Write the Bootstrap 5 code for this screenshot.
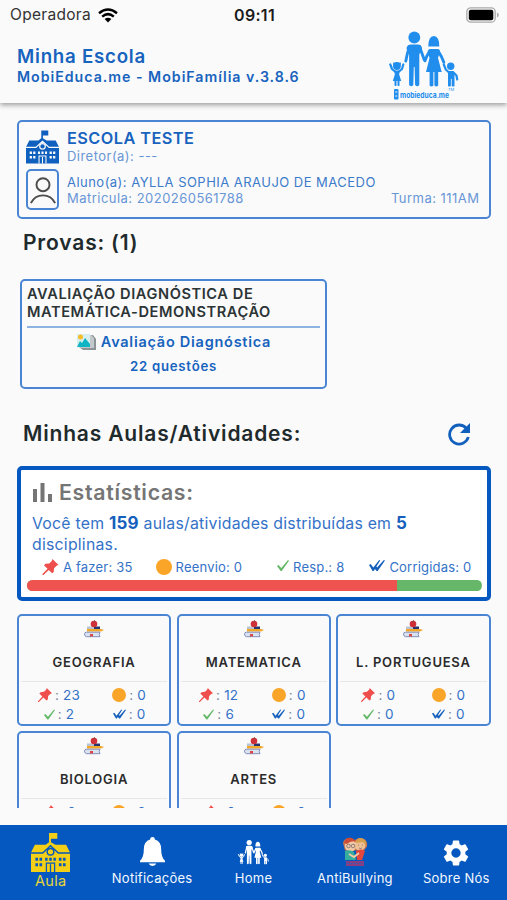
<!DOCTYPE html>
<html lang="pt-BR">
<head>
<meta charset="utf-8">
<meta name="viewport" content="width=device-width, initial-scale=1">
<title>Minha Escola</title>
<link rel="stylesheet" href="https://cdn.jsdelivr.net/npm/bootstrap@5.3.0/dist/css/bootstrap.min.css">
<style>
:root{--blue:#0458bf;--line:#4985d2;--soft:#3d7bcb}
body{font-family:Inter,"Liberation Sans",sans-serif;background:#fafafa;color:#1f2a2c;height:900px;overflow:hidden}
svg{display:block;flex:none}
.app{height:900px}
.top-bar{height:103px;background:#fafafa;box-shadow:0 2px 5px rgba(0,0,0,.38);z-index:2;flex:none}
.status{height:30px;padding:0 8px 0 10px;color:#1c1c1c}
.status>div{flex:1}
.carrier{font-size:15.5px;letter-spacing:.3px;color:#333}
.clock{font-size:16px;font-weight:600;letter-spacing:.3px}
.titles{padding:15px 0 0 17px;color:#1763be;font-weight:600}
.t1{font-size:18.7px;line-height:23px;letter-spacing:.75px}
.t2{font-size:14.2px;line-height:18px;letter-spacing:.98px}
.brand{margin-right:46px}
.content{height:705px;overflow:hidden;padding:17px 16.5px 0 17px;flex:none}
.box{border:2px solid var(--line);border-radius:5px}
.school{height:99px;padding:8px 9px 0 7px;color:var(--soft);font-size:13px;line-height:16px;letter-spacing:.47px}
.school-name{font-size:16.3px;font-weight:600;line-height:17px;color:#1763be;letter-spacing:.45px}
.director{line-height:19px}
.student{margin-top:3px}
.student-text{padding-top:5px}
.pale{color:#6896d6}
.avatar{width:33px;height:41px}
.heading{font-size:21px;font-weight:600;line-height:24px;letter-spacing:.82px}
.exams-head{margin:12px 0 0 6px}
.exam{width:307px;height:110px;margin:24px 0 0 3px;padding:5px 5px}
.exam-title{font-size:14.6px;font-weight:600;line-height:17.5px;letter-spacing:.58px;color:#2c3436}
.exam-kind{font-size:14.5px;line-height:20px;letter-spacing:.74px;color:#1763be}
.exam-count{font-size:13.2px;line-height:16px;letter-spacing:.75px;color:#1763be;margin-top:5.5px}
.rule{height:1.5px;background:#8db3e3;margin:5px 0 4.5px}
.lessons-head{margin:33px 0 0 6px;padding-right:20px}
.stats{border:4px solid var(--blue);border-radius:5px;height:135px;background:#fff;color:#3472c8;margin-top:20px}
.stats-title{font-size:21.3px;font-weight:600;line-height:26px;letter-spacing:.7px;color:#757575}
.stats-text{font-size:15.8px;line-height:21px;letter-spacing:.24px;padding:8px 20px 0 11px}
.stats-text b{font-size:17px;font-weight:700;color:#1560bd}
.legend-row{font-size:13px;line-height:16px;letter-spacing:.2px;padding:4px 15px 0 21px}
.progress.day{height:11px;border-radius:6px;margin:5px 5px 0 6px;background:#66b76a}
.bg-todo{background:#ee534f}
.bg-done{background:#66b76a}
.subjects{display:grid;grid-template-columns:repeat(3,1fr);gap:5px 5.5px;margin-top:13px}
.subject{height:112px;padding:4px 2px 0}
.subject-name{font-size:13px;font-weight:600;line-height:18px;letter-spacing:.78px;color:#2b2b2b;margin-top:15px;text-align:center}
.thin{height:1px;background:#e7e7e7;margin-top:10px}
.counts{font-size:13.5px;line-height:19px;letter-spacing:.2px;color:#3472c8;padding:3.500px 3px 0}
.counts .col-6{height:19px;gap:3px}
.counts i{font-style:normal;color:#7a8ba5}
.tabs{margin-top:16.5px;height:75.5px;background:var(--blue);color:#f4f8ff;font-size:13px;letter-spacing:.26px;flex:none}
.tabs .tab{flex:1;height:75px;padding-bottom:12.5px;line-height:17px}
.tabs .tab svg{margin-bottom:4px}
.tabs .active-tab{color:#e8d43a;font-size:14.5px;padding-bottom:10.5px}
.tabs .active-tab svg{margin-bottom:0}
</style>
</head>
<body>
<svg width="0" height="0" class="position-absolute" aria-hidden="true">
<defs>
<symbol id="school" viewBox="0 0 40 40"><path fill="currentColor" d="M18.500 0H27v6h-6.500v3.500L25 12h11l4 8v20H0V20l4-8h11l3.500-2.500z"/><path fill="none" stroke="var(--hole)" stroke-width="1.400" d="M0 20.500h12l8-7.500 8 7.500h12"/><circle cx="20" cy="19.200" r="3.400" fill="currentColor" stroke="var(--hole)" stroke-width="1.500"/><path fill="none" stroke="var(--hole)" stroke-width="1.300" d="M15.800 40V31h8.400v9M20 32v8"/><path fill="var(--hole)" d="M4.500 25.500h2.700v3H4.500zM8.700 25.500h2.700v3H8.700zM4.500 31h2.700v3H4.500zM8.700 31h2.700v3H8.700zM28.600 25.500h2.700v3h-2.700zM32.800 25.500h2.700v3h-2.700zM28.600 31h2.700v3h-2.700zM32.800 31h2.700v3h-2.700zM14.500 25.500h2.500v3h-2.500zM18.700 25.500h2.600v3h-2.600zM23 25.500h2.500v3H23z"/></symbol>
<symbol id="family" viewBox="0 0 70 58">
<g fill="currentColor">
<circle cx="25.300" cy="6.500" r="5.900"/><path d="M22 13.500h7q3.500 0 4 4l-2.700 6V54q-2 2.500-4.200 0l-.5-18h-.8l-.5 18q-2.200 2.500-4.200 0V23.500l-2.600-6q.5-4 4.500-4z"/>
<path d="M39.300 15.500q0-10.500 5.500-10.500t5.500 10.500z"/><path d="M42 18h6q3 0 3 3l-2 6 3.700 14h-3.500v13.500q-2 1.800-3.800 0V41h-1v13.500q-2 1.800-3.800 0V41H37l3.500-14-1.800-6q0-3 3.300-3z"/>
<circle cx="7.900" cy="35" r="3.900"/><path d="M4 31.500l3 .5-2.500 3zM12 31.500l-3 .5 2.500 3zM5.500 39.500h5l-.3 4 2 6.500h-1.700v4.500q-1 1-2 0V50h-1v4.500q-1 1-2 0V50H3.800l2-6.500z"/>
<circle cx="61.700" cy="35.300" r="3.700"/><path d="M59.500 40h5l1 3v12q-1.500 1-2.800 0v-7h-.8v7q-1.500 1-2.900 0V42z"/></g>
<g fill="none" stroke="currentColor" stroke-width="2.900" stroke-linecap="round" stroke-linejoin="round"><path d="M20.500 15.500 18.300 23l-1.500 7M30.500 15.500l2.500 7 2.300 6.500M41 19.800l-3 5-2 5M49 19.800l3.500 6 2.300 5.500"/><path stroke-width="2.200" d="M1.300 33.500 3 38l3.500 3M14.300 33.500 13 38l-3.500 3M54.800 33.500l2 5 3.200 3M64.500 41.500l3 3 .7 4"/></g></symbol>
<symbol id="pin" viewBox="0 0 16 16"><path fill="#ee4f4c" d="M10 0 16 6 14 6.800 11.600 9.200 11.200 13 9.700 14.300 6.200 10.900 1 16H0v-1l5-5.300L1.500 6.300 3 4.800l3.800-.4L9.300 2z"/></symbol>
<symbol id="check" viewBox="0 0 12 12"><path fill="#62b866" d="M0 6.500 1.500 5.500 4.300 8.500 11 .6l1 .6-7.300 10.300h-1z"/></symbol>
<symbol id="checks" viewBox="0 0 16 12"><path fill="#1560bd" d="M0 5.500l1.700-1L4.300 8 10.200.5l1 .6-3.800 6 .7.900L14.900.5l1.100.6-7.300 10.500H7.500L6 9.600l-1.300 2H3.600z"/></symbol>
<symbol id="dot" viewBox="0 0 16 16"><circle cx="8" cy="8" r="8" fill="#faa528"/></symbol>
<symbol id="books" viewBox="0 0 20 18"><path fill="#25356f" d="M10 6.500h6v3h-6z"/><path fill="#b9c3d4" d="M3 6.500h7V9H3z"/><path fill="#f2a62a" d="M3 9h14l3 1-3 1.500H3z"/><path fill="#dbe2ef" stroke="#7685b5" stroke-width=".9" d="M16 12.200H2.500q-2 0-2 2t2 2.500H16l-.8-2.200z"/><path fill="#d94747" d="M6 14h3v3l-1.500-1L6 17z"/><circle cx="10" cy="4" r="3.300" fill="#cf3038"/><path d="M10 2.500 10.700 0" stroke="#7f5148" stroke-width=".8"/></symbol>
</defs>
</svg>
<div class="app d-flex flex-column">
<header class="top-bar position-relative">
  <div class="status d-flex align-items-center">
    <div class="d-flex align-items-center" style="gap:7px"><span class="carrier">Operadora</span>
      <svg width="20" height="15" viewBox="0 0 20 15"><g fill="none" stroke="#000" stroke-width="2.500"><path d="M1 5.200Q10-2.200 19 5.200M4.200 8.600q5.800-4.900 11.600 0"/></g><path d="M6.600 11q3.400-2.600 6.800 0L10 14.600z"/></svg></div>
    <span class="clock">09:11</span>
    <div class="d-flex justify-content-end"><svg width="33" height="16" viewBox="0 0 33 16"><rect x=".8" y=".8" width="28.400" height="14.400" rx="4" fill="none" stroke="#aaa" stroke-width="1.300"/><rect x="2.800" y="2.800" width="24.500" height="10.400" rx="2" fill="#000"/><path d="M31 5.500q1.800.8 1.800 2.500T31 10.500z" fill="#aaa"/></svg></div>
  </div>
  <div class="d-flex justify-content-between">
    <div class="titles"><div class="t1">Minha Escola</div><div class="t2">MobiEduca.me - MobiFamília v.3.8.6</div></div>
    <svg class="brand" width="73" height="72" viewBox="0 0 73 72" color="#218eed"><use href="#family" x="1" y="1" width="70" height="58"/><rect x="6" y="59" width="4.500" height="10.500" rx="1" fill="#218eed"/><path d="M7.300 62h2M7.300 66h2" stroke="#fff" stroke-width="1"/><text x="12" y="67.500" font-size="8" font-weight="700" fill="#218eed" textLength="49" lengthAdjust="spacingAndGlyphs">mobieduca.me</text><text x="60" y="60.500" font-size="4" fill="#218eed">TM</text></svg>
  </div>
</header>
<main class="content">
  <section class="box school">
    <div class="d-flex gap-2">
      <svg width="33" height="34" color="#0f5fbe" style="--hole:#fafafa"><use href="#school"/></svg>
      <div><div class="school-name">ESCOLA TESTE</div><div class="pale director">Diretor(a): ---</div></div>
    </div>
    <div class="d-flex gap-2 student">
      <div class="box avatar d-flex justify-content-center align-items-end flex-shrink-0"><svg width="28" height="33" viewBox="0 0 28 34" fill="none" stroke="#4d4d4d" stroke-width="2"><circle cx="14" cy="10" r="6.700"/><path d="M1.500 29q4-8 12.500-8t12.500 8"/></svg></div>
      <div class="flex-grow-1 student-text"><div>Aluno(a): AYLLA SOPHIA ARAUJO DE MACEDO</div><div class="d-flex justify-content-between pale"><span>Matricula: 2020260561788</span><span>Turma: 111AM</span></div></div>
    </div>
  </section>
  <h2 class="heading exams-head">Provas: (1)</h2>
  <section class="box exam">
    <div class="exam-title">AVALIAÇÃO DIAGNÓSTICA DE<br>MATEMÁTICA-DEMONSTRAÇÃO</div>
    <div class="rule"></div>
    <div class="exam-kind d-flex justify-content-center align-items-center gap-1 fw-semibold">
      <svg width="21" height="18" viewBox="0 0 21 18"><path fill="#8b9396" d="m4 4 13-2 3 4v11H7l-4-3z"/><path fill="#c3c9ca" d="M2 2h13l3 3v10H5l-4-2z"/><path fill="#d7eef0" d="M1 1h13v13H1z"/><path fill="#10b5c4" d="m1 14 3-6 2 2 3-5 5 6v3z"/><circle cx="4.500" cy="4" r="2.500" fill="#f7bd27"/></svg>
      <span>Avaliação Diagnóstica</span></div>
    <div class="exam-count text-center fw-semibold">22 questões</div>
  </section>
  <div class="lessons-head d-flex justify-content-between align-items-center"><h2 class="heading mb-0">Minhas Aulas/Atividades:</h2>
    <svg width="24" height="24" viewBox="0 0 24 24"><path fill="none" stroke="#1260bd" stroke-width="2.800" d="M19.500 6.500A9.500 9.500 0 1 0 21.300 15"/><path fill="#1260bd" d="M23 1v10H13z"/></svg></div>
  <section class="stats">
    <div class="d-flex align-items-center" style="padding:9px 0 0 12px;gap:7px"><svg width="19" height="19" viewBox="0 0 19 19" fill="#757575"><path d="M0 6h4v13H0zM7.500 0h4v19h-4zM15 11h4v8h-4z"/></svg><span class="stats-title">Estatísticas:</span></div>
    <div class="stats-text">Você tem <b>159</b> aulas/atividades distribuídas em <b>5</b> disciplinas.</div>
    <div class="legend-row d-flex">
      <span class="d-flex gap-1"><svg width="17" height="16"><use href="#pin"/></svg>A fazer: 35</span>
      <span class="d-flex gap-1" style="margin-left:23px"><svg width="16" height="16"><use href="#dot"/></svg>Reenvio: 0</span>
      <span class="d-flex gap-1 ms-auto"><svg width="12" height="13"><use href="#check"/></svg>Resp.: 8</span>
      <span class="d-flex gap-1" style="margin-left:25px"><svg width="16" height="13"><use href="#checks"/></svg>Corrigidas: 0</span>
    </div>
    <div class="progress day"><div class="progress-bar bg-todo" style="width:81.4%"></div><div class="progress-bar bg-done" style="width:18.6%"></div></div>
  </section>
  <section class="subjects" id="subjects"></section>
</main>
<nav class="tabs d-flex">
  <div class="tab active-tab d-flex flex-column align-items-center justify-content-end"><svg width="39" height="39" color="#f3cf17" style="--hole:#0458bf"><use href="#school"/></svg>Aula</div>
  <div class="tab d-flex flex-column align-items-center justify-content-end"><svg width="25" height="29" viewBox="0 0 26 30"><path fill="#fff" d="M10.500 2.500q0-2.500 2.500-2.500t2.500 2.500q6.500 2 6.500 10 0 9 4 12v1.700H0v-1.700q4-3 4-12 0-8 6.500-10zM9 27.500h8q-1 2.500-4 2.500t-4-2.500z"/></svg>Notificações</div>
  <div class="tab d-flex flex-column align-items-center justify-content-end"><svg width="31" height="27" color="#fff"><use href="#family"/></svg>Home</div>
  <div class="tab d-flex flex-column align-items-center justify-content-end"><svg width="26" height="29" viewBox="0 0 26 29"><path fill="#c9744c" d="M1 6q1-5 7-5l5 2q4-3 8-1.500 5 2 4 8l-3 4H3z"/><circle cx="8.500" cy="9" r="5.700" fill="#f2c9a5"/><circle cx="18" cy="8" r="5.500" fill="#efc094"/><path fill="#ce4b37" d="M2 6q1-6 8-5l4 3q-6 0-9 3z"/><path fill="#d5a14f" d="M14 6q0-5 5-5 6 1 5 8l-3-4z"/><path fill="#36ad9c" d="M3 14q5-2 9 1l2 8H3z"/><path fill="#e2473d" d="M14 14q5-3 9 0l-3 9h-5z"/><path stroke="#f2c9a5" stroke-width="2" d="m7 17 5 3 5-4" fill="none"/><g stroke="#675f6b" stroke-width=".7" fill="none"><circle cx="6.500" cy="9" r="1.800"/><circle cx="11" cy="9" r="1.800"/><path d="M16 8h1M20 8h1M17 11q1.500 1 3 0"/></g><path fill="#8a3e82" d="M4 24h18v5H4z"/><path stroke="#3c59b0" stroke-width="1" stroke-dasharray="2 1" d="M5 26.500h16"/></svg>AntiBullying</div>
  <div class="tab d-flex flex-column align-items-center justify-content-end"><svg width="26" height="26" viewBox="2 2 20 20"><path fill="#fff" d="M19.140 12.940c.04-.3.060-.61.060-.94s-.02-.64-.07-.94l2.030-1.580a.49.490 0 0 0 .12-.61l-1.920-3.320a.49.490 0 0 0-.59-.22l-2.390.96a7 7 0 0 0-1.620-.94l-.36-2.540A.48.480 0 0 0 13.920 2.400h-3.840a.48.480 0 0 0-.47.410l-.36 2.540c-.59.240-1.130.57-1.620.94l-2.390-.96a.48.480 0 0 0-.59.220L2.740 8.870a.47.470 0 0 0 .12.610l2.030 1.580a6 6 0 0 0 0 1.880l-2.030 1.580a.49.490 0 0 0-.12.610l1.920 3.320c.12.220.37.290.59.220l2.390-.96c.5.380 1.030.7 1.620.94l.36 2.540c.05.240.24.410.48.410h3.840c.24 0 .44-.17.470-.41l.36-2.540c.59-.24 1.130-.56 1.620-.94l2.390.96c.22.080.47 0 .59-.22l1.920-3.320a.47.470 0 0 0-.12-.61zM12 15.600a3.600 3.600 0 1 1 0-7.200 3.600 3.600 0 0 1 0 7.200z"/></svg>Sobre Nós</div>
</nav>
</div>
<script>
const subjects = [["GEOGRAFIA",23,0,2,0],["MATEMATICA",12,0,6,0],["L. PORTUGUESA",0,0,0,0],["BIOLOGIA",0,0,0,0],["ARTES",0,0,0,0]];
const count = (icon, w, h, n) => `<div class="col-6 d-flex justify-content-center align-items-center"><svg width="${w}" height="${h}"><use href="#${icon}"/></svg><span><i>:</i> ${n}</span></div>`;
document.getElementById("subjects").innerHTML = subjects.map(([name, todo, redo, done, graded]) => `
<article class="box subject"><svg class="mx-auto" width="20" height="18"><use href="#books"/></svg>
<div class="subject-name">${name}</div><div class="thin"></div>
<div class="row g-0 counts">${count("pin",14,14,todo)}${count("dot",14,14,redo)}${count("check",11,11,done)}${count("checks",13,10,graded)}</div></article>`).join("");
</script>
<script src="https://cdn.jsdelivr.net/npm/bootstrap@5.3.0/dist/js/bootstrap.bundle.min.js"></script>
</body>
</html>
